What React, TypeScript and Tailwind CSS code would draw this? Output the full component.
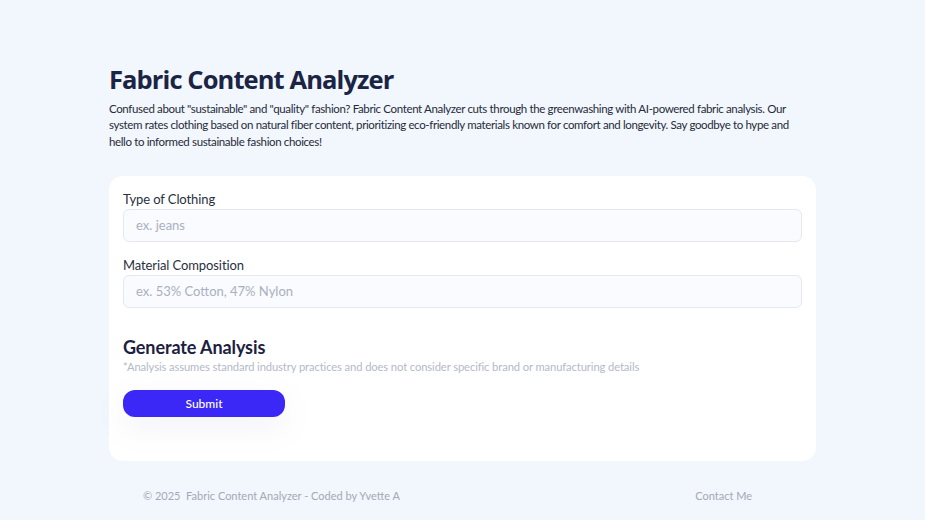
export default function App() {
  return (
    <main
      className="min-h-screen w-full bg-[#f2f6fd] text-[#1b2342]"
      style={{ fontFamily: "Lato, 'Noto Sans', sans-serif" }}
    >
      <div className="mx-auto w-[707px] pt-[63px]">
        <h1
          className="text-[25.5px] font-bold leading-[33px] tracking-[-0.9px] text-[#1a2444]"
          style={{ fontFamily: "'Open Sans', sans-serif" }}
        >
          Fabric Content Analyzer
        </h1>
        <div className="mt-[5px] text-[11.5px] leading-[16.4px] tracking-[-0.36px] text-[#262b3a] [&>p]:whitespace-nowrap">
          <p>
            Confused about "sustainable" and "quality" fashion? Fabric Content Analyzer cuts through the greenwashing with AI-powered fabric analysis. Our
          </p>
          <p>
            system rates clothing based on natural fiber content, prioritizing eco-friendly materials known for comfort and longevity. Say goodbye to hype and
          </p>
          <p>hello to informed sustainable fashion choices!</p>
        </div>

        <section className="mt-[26px] rounded-[14px] bg-white px-[14px] pb-[44px] pt-[15px]">
          <label className="block text-[13px] leading-[16px] tracking-[-0.1px] text-[#2a2f3f]">
            Type of Clothing
          </label>
          <div className="mt-[2px] flex h-[33px] items-center rounded-[6px] border border-[#e4e8f0] bg-[#f9fbfe] px-[12px] text-[13px] text-[#a9b0bf]">
            ex. jeans
          </div>

          <label className="mt-[15px] block text-[13px] leading-[16px] tracking-[-0.1px] text-[#2a2f3f]">
            Material Composition
          </label>
          <div className="mt-[2px] flex h-[33px] items-center rounded-[6px] border border-[#e4e8f0] bg-[#f9fbfe] px-[12px] text-[13px] text-[#a9b0bf]">
            ex. 53% Cotton, 47% Nylon
          </div>

          <h2 className="mt-[28px] text-[18px] font-bold leading-[22px] tracking-[-0.1px] text-[#1c2140]">
            Generate Analysis
          </h2>
          <p className="mt-[2px] text-[11.2px] leading-[14px] tracking-[-0.1px] text-[#b3bac8]">
            *Analysis assumes standard industry practices and does not consider specific brand or manufacturing details
          </p>
          <button className="mt-[16px] h-[27px] w-[162px] rounded-[12px] bg-[#3b27f6] text-[12px] font-medium text-white shadow-[0_10px_30px_rgba(120,130,170,0.10)]">
            Submit
          </button>
        </section>

        <footer className="flex items-center justify-between pl-[34px] pr-[64px] pt-[27px] text-[11px] text-[#a3a9b8]">
          <span>© 2025&nbsp; Fabric Content Analyzer - Coded by Yvette A</span>
          <span>Contact Me</span>
        </footer>
      </div>
    </main>
  );
}
